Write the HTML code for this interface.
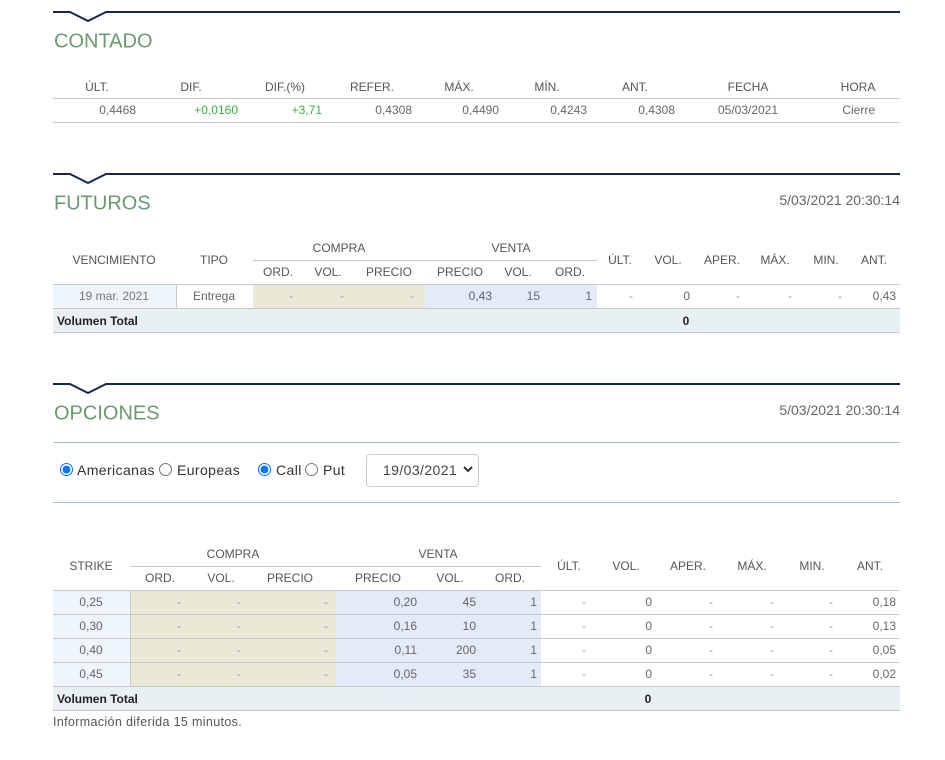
<!DOCTYPE html>
<html><head><meta charset="utf-8"><style>
body{margin:0;width:945px;height:760px;background:#fff;position:relative;font-family:"Liberation Sans",sans-serif;overflow:hidden}
div{position:absolute}
.c{transform:translate(-50%,-50%);font-size:12px;color:#555;white-space:nowrap}
.r{transform:translate(-100%,-50%);font-size:12px;color:#666;white-space:nowrap}
.g{color:#3cb043}
.h{font-size:20px;color:#6b9a70;font-weight:normal;white-space:nowrap;transform:translateY(-50%)}
.ts{font-size:14px;color:#666;transform:translate(-100%,-50%);white-space:nowrap}
.ln{height:1px;background:#c8c8c8}
.b{font-weight:bold;color:#222;font-size:12px;transform:translateY(-50%);white-space:nowrap}
.bc{font-weight:bold;color:#222;font-size:12px;transform:translate(-50%,-50%)}
.rd{margin:0;width:13px;height:13px;position:absolute;top:463px}
.rl{top:470px;transform:translateY(-50%);font-size:14px;color:#333;white-space:nowrap;letter-spacing:0.4px}
</style></head><body>
<svg style="position:absolute;left:0;top:0" width="945" height="760">
<g fill="none" stroke="#15284b" stroke-width="2">
<polyline points="53,12 70,12 88,21 106,12 900,12"/>
<polyline points="53,174 70,174 88,183 106,174 900,174"/>
<polyline points="53,384 70,384 88,393 106,384 900,384"/>
</g></svg>

<!-- CONTADO -->
<div class="h" style="left:54px;top:42px">CONTADO</div>
<div class="c" style="left:97px;top:87px">ÚLT.</div>
<div class="c" style="left:191px;top:87px">DIF.</div>
<div class="c" style="left:285px;top:87px">DIF.(%)</div>
<div class="c" style="left:372px;top:87px">REFER.</div>
<div class="c" style="left:459px;top:87px">MÁX.</div>
<div class="c" style="left:547px;top:87px">MÍN.</div>
<div class="c" style="left:635px;top:87px">ANT.</div>
<div class="c" style="left:748px;top:87px">FECHA</div>
<div class="c" style="left:858px;top:87px">HORA</div>
<div class="ln" style="left:53px;top:98px;width:847px"></div>
<div class="r" style="left:136px;top:110px">0,4468</div>
<div class="r g" style="left:238px;top:110px">+0,0160</div>
<div class="r g" style="left:322px;top:110px">+3,71</div>
<div class="r" style="left:412px;top:110px">0,4308</div>
<div class="r" style="left:499px;top:110px">0,4490</div>
<div class="r" style="left:587px;top:110px">0,4243</div>
<div class="r" style="left:675px;top:110px">0,4308</div>
<div class="c" style="left:748px;top:110px;color:#666">05/03/2021</div>
<div class="r" style="left:875px;top:110px">Cierre</div>
<div class="ln" style="left:53px;top:122px;width:847px"></div>

<!-- FUTUROS -->
<div class="h" style="left:54px;top:204px">FUTUROS</div>
<div class="ts" style="left:900px;top:200px">5/03/2021 20:30:14</div>
<div class="c" style="left:114px;top:260px">VENCIMIENTO</div>
<div class="c" style="left:214px;top:260px">TIPO</div>
<div class="c" style="left:339px;top:248px">COMPRA</div>
<div class="c" style="left:511px;top:248px">VENTA</div>
<div class="ln" style="left:253px;top:260px;width:344px"></div>
<div class="c" style="left:278px;top:272px">ORD.</div>
<div class="c" style="left:328px;top:272px">VOL.</div>
<div class="c" style="left:389px;top:272px">PRECIO</div>
<div class="c" style="left:460px;top:272px">PRECIO</div>
<div class="c" style="left:518px;top:272px">VOL.</div>
<div class="c" style="left:570px;top:272px">ORD.</div>
<div class="c" style="left:620px;top:260px">ÚLT.</div>
<div class="c" style="left:668px;top:260px">VOL.</div>
<div class="c" style="left:722px;top:260px">APER.</div>
<div class="c" style="left:775px;top:260px">MÁX.</div>
<div class="c" style="left:826px;top:260px">MIN.</div>
<div class="c" style="left:874px;top:260px">ANT.</div>
<div style="left:53px;top:284px;width:123px;height:24px;background:#eef5fc"></div>
<div style="left:176px;top:284px;width:1px;height:24px;background:#c8c8c8"></div>
<div style="left:253px;top:284px;width:172px;height:24px;background:#eae8d7"></div>
<div style="left:425px;top:284px;width:172px;height:24px;background:#e3eaf8"></div>
<div style="left:53px;top:308px;width:847px;height:24px;background:#e9f0f3"></div>
<div class="ln" style="left:53px;top:284px;width:847px"></div>
<div class="ln" style="left:53px;top:308px;width:847px"></div>
<div class="ln" style="left:53px;top:332px;width:847px"></div>
<div class="c" style="left:114px;top:296px;color:#777">19 mar. 2021</div>
<div class="c" style="left:214px;top:296px;color:#666">Entrega</div>
<div class="c" style="left:291px;top:296px;color:#999">-</div>
<div class="c" style="left:342px;top:296px;color:#999">-</div>
<div class="c" style="left:412px;top:296px;color:#999">-</div>
<div class="r" style="left:492px;top:296px">0,43</div>
<div class="r" style="left:540px;top:296px">15</div>
<div class="r" style="left:592px;top:296px">1</div>
<div class="c" style="left:631px;top:296px;color:#999">-</div>
<div class="r" style="left:690px;top:296px">0</div>
<div class="c" style="left:738px;top:296px;color:#999">-</div>
<div class="c" style="left:790px;top:296px;color:#999">-</div>
<div class="c" style="left:840px;top:296px;color:#999">-</div>
<div class="r" style="left:896px;top:296px">0,43</div>
<div class="b" style="left:57px;top:321px">Volumen Total</div>
<div class="bc" style="left:686px;top:321px">0</div>

<!-- OPCIONES -->
<div class="h" style="left:54px;top:414px">OPCIONES</div>
<div class="ts" style="left:900px;top:410px">5/03/2021 20:30:14</div>
<div style="left:53px;top:442px;width:847px;height:1px;background:#9dbfe0"></div>
<input type="radio" checked class="rd" style="left:60px">
<div class="rl" style="left:77px">Americanas</div>
<input type="radio" class="rd" style="left:159px">
<div class="rl" style="left:177px">Europeas</div>
<input type="radio" checked class="rd" style="left:258px">
<div class="rl" style="left:276px">Call</div>
<input type="radio" class="rd" style="left:305px">
<div class="rl" style="left:323px">Put</div>
<div style="left:366px;top:454px;width:113px;height:33px;border:1px solid #ccc;border-radius:4px;box-sizing:border-box"></div>
<div style="left:383px;top:470px;transform:translateY(-50%);font-size:14px;color:#444;letter-spacing:0.4px">19/03/2021</div>
<svg style="position:absolute;left:463px;top:466px" width="10" height="8"><polyline points="1,1 5,5 9,1" fill="none" stroke="#333" stroke-width="2"/></svg>
<div style="left:53px;top:502px;width:847px;height:1px;background:#9dbfe0"></div>

<div class="c" style="left:91px;top:566px">STRIKE</div>
<div class="c" style="left:233px;top:554px">COMPRA</div>
<div class="c" style="left:438px;top:554px">VENTA</div>
<div class="ln" style="left:130px;top:566px;width:411px"></div>
<div class="c" style="left:160px;top:578px">ORD.</div>
<div class="c" style="left:221px;top:578px">VOL.</div>
<div class="c" style="left:290px;top:578px">PRECIO</div>
<div class="c" style="left:378px;top:578px">PRECIO</div>
<div class="c" style="left:450px;top:578px">VOL.</div>
<div class="c" style="left:510px;top:578px">ORD.</div>
<div class="c" style="left:569px;top:566px">ÚLT.</div>
<div class="c" style="left:626px;top:566px">VOL.</div>
<div class="c" style="left:688px;top:566px">APER.</div>
<div class="c" style="left:752px;top:566px">MÁX.</div>
<div class="c" style="left:812px;top:566px">MIN.</div>
<div class="c" style="left:870px;top:566px">ANT.</div>
<div style="left:53px;top:590px;width:77px;height:96px;background:#eef5fc"></div>
<div style="left:130px;top:590px;width:1px;height:96px;background:#c8c8c8"></div>
<div style="left:131px;top:590px;width:205px;height:96px;background:#eae8d7"></div>
<div style="left:336px;top:590px;width:205px;height:96px;background:#e3eaf8"></div>
<div style="left:53px;top:686px;width:847px;height:24px;background:#e9f0f3"></div>
<div class="ln" style="left:53px;top:590px;width:847px"></div>
<div class="ln" style="left:53px;top:614px;width:847px"></div>
<div class="ln" style="left:53px;top:638px;width:847px"></div>
<div class="ln" style="left:53px;top:662px;width:847px"></div>
<div class="ln" style="left:53px;top:686px;width:847px"></div>
<div class="ln" style="left:53px;top:710px;width:847px"></div>

<div class="c" style="left:91px;top:602px;color:#666">0,25</div>
<div class="c" style="left:91px;top:626px;color:#666">0,30</div>
<div class="c" style="left:91px;top:650px;color:#666">0,40</div>
<div class="c" style="left:91px;top:674px;color:#666">0,45</div>

<div class="c" style="left:179px;top:602px;color:#999">-</div><div class="c" style="left:239px;top:602px;color:#999">-</div><div class="c" style="left:326px;top:602px;color:#999">-</div>
<div class="c" style="left:179px;top:626px;color:#999">-</div><div class="c" style="left:239px;top:626px;color:#999">-</div><div class="c" style="left:326px;top:626px;color:#999">-</div>
<div class="c" style="left:179px;top:650px;color:#999">-</div><div class="c" style="left:239px;top:650px;color:#999">-</div><div class="c" style="left:326px;top:650px;color:#999">-</div>
<div class="c" style="left:179px;top:674px;color:#999">-</div><div class="c" style="left:239px;top:674px;color:#999">-</div><div class="c" style="left:326px;top:674px;color:#999">-</div>

<div class="r" style="left:417px;top:602px">0,20</div><div class="r" style="left:476px;top:602px">45</div><div class="r" style="left:537px;top:602px">1</div>
<div class="r" style="left:417px;top:626px">0,16</div><div class="r" style="left:476px;top:626px">10</div><div class="r" style="left:537px;top:626px">1</div>
<div class="r" style="left:417px;top:650px">0,11</div><div class="r" style="left:476px;top:650px">200</div><div class="r" style="left:537px;top:650px">1</div>
<div class="r" style="left:417px;top:674px">0,05</div><div class="r" style="left:476px;top:674px">35</div><div class="r" style="left:537px;top:674px">1</div>

<div class="c" style="left:584px;top:602px;color:#999">-</div><div class="r" style="left:652px;top:602px">0</div><div class="c" style="left:711px;top:602px;color:#999">-</div><div class="c" style="left:772px;top:602px;color:#999">-</div><div class="c" style="left:831px;top:602px;color:#999">-</div><div class="r" style="left:896px;top:602px">0,18</div>
<div class="c" style="left:584px;top:626px;color:#999">-</div><div class="r" style="left:652px;top:626px">0</div><div class="c" style="left:711px;top:626px;color:#999">-</div><div class="c" style="left:772px;top:626px;color:#999">-</div><div class="c" style="left:831px;top:626px;color:#999">-</div><div class="r" style="left:896px;top:626px">0,13</div>
<div class="c" style="left:584px;top:650px;color:#999">-</div><div class="r" style="left:652px;top:650px">0</div><div class="c" style="left:711px;top:650px;color:#999">-</div><div class="c" style="left:772px;top:650px;color:#999">-</div><div class="c" style="left:831px;top:650px;color:#999">-</div><div class="r" style="left:896px;top:650px">0,05</div>
<div class="c" style="left:584px;top:674px;color:#999">-</div><div class="r" style="left:652px;top:674px">0</div><div class="c" style="left:711px;top:674px;color:#999">-</div><div class="c" style="left:772px;top:674px;color:#999">-</div><div class="c" style="left:831px;top:674px;color:#999">-</div><div class="r" style="left:896px;top:674px">0,02</div>

<div class="b" style="left:57px;top:699px">Volumen Total</div>
<div class="bc" style="left:648px;top:699px">0</div>
<div style="left:53px;top:722px;transform:translateY(-50%);font-size:12.5px;color:#555;white-space:nowrap;letter-spacing:0.35px">Información diferida 15 minutos.</div>
</body></html>
